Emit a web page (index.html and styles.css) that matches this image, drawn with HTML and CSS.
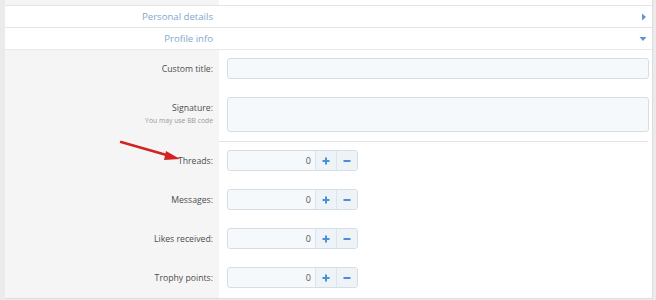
FILE: index.html
```html
<!DOCTYPE html>
<html lang="en">
<head>
    <meta charset="UTF-8">
    <title>Edit user</title>
    <link rel="stylesheet" href="styles.css">
</head>
<body>
    <div class="panel">
        <div class="row top-strip">
            <div class="label-cell"></div>
            <div class="field-cell"></div>
        </div>
        <div class="tab-header">
            <span class="tab-title">Personal details</span>
            <svg class="tab-icon" width="6" height="8" viewBox="0 0 6 8"><path d="M1 0.5 L5 4 L1 7.5 Z" fill="#5f95cf"/></svg>
        </div>
        <div class="tab-header">
            <span class="tab-title">Profile info</span>
            <svg class="tab-icon" width="8" height="6" viewBox="0 0 8 6"><path d="M0.5 1 L7.5 1 L4 5 Z" fill="#5f95cf"/></svg>
        </div>

        <div class="form-body">
            <div class="row first">
                <div class="label-cell"><span class="label">Custom title:</span></div>
                <div class="field-cell"><div class="text-input"></div></div>
            </div>
            <div class="row">
                <div class="label-cell">
                    <div class="label-group">
                        <span class="label">Signature:</span>
                        <span class="hint">You may use BB code</span>
                    </div>
                </div>
                <div class="field-cell"><div class="text-input area"></div></div>
            </div>
            <div class="row separated">
                <div class="label-cell"><span class="label">Threads:</span></div>
                <div class="field-cell">
                    <div class="number-input">
                        <span class="number-value">0</span>
                        <span class="spin-btn"><svg width="8" height="8" viewBox="0 0 8 8"><path d="M4 0.5 V7.5 M0.5 4 H7.5" stroke="#4b8fd6" stroke-width="2"/></svg></span>
                        <span class="spin-btn"><svg width="8" height="8" viewBox="0 0 8 8"><path d="M0.5 4 H7.5" stroke="#4b8fd6" stroke-width="2"/></svg></span>
                    </div>
                </div>
            </div>
            <div class="row">
                <div class="label-cell"><span class="label">Messages:</span></div>
                <div class="field-cell">
                    <div class="number-input">
                        <span class="number-value">0</span>
                        <span class="spin-btn"><svg width="8" height="8" viewBox="0 0 8 8"><path d="M4 0.5 V7.5 M0.5 4 H7.5" stroke="#4b8fd6" stroke-width="2"/></svg></span>
                        <span class="spin-btn"><svg width="8" height="8" viewBox="0 0 8 8"><path d="M0.5 4 H7.5" stroke="#4b8fd6" stroke-width="2"/></svg></span>
                    </div>
                </div>
            </div>
            <div class="row">
                <div class="label-cell"><span class="label">Likes received:</span></div>
                <div class="field-cell">
                    <div class="number-input">
                        <span class="number-value">0</span>
                        <span class="spin-btn"><svg width="8" height="8" viewBox="0 0 8 8"><path d="M4 0.5 V7.5 M0.5 4 H7.5" stroke="#4b8fd6" stroke-width="2"/></svg></span>
                        <span class="spin-btn"><svg width="8" height="8" viewBox="0 0 8 8"><path d="M0.5 4 H7.5" stroke="#4b8fd6" stroke-width="2"/></svg></span>
                    </div>
                </div>
            </div>
            <div class="row last">
                <div class="label-cell"><span class="label">Trophy points:</span></div>
                <div class="field-cell">
                    <div class="number-input">
                        <span class="number-value">0</span>
                        <span class="spin-btn"><svg width="8" height="8" viewBox="0 0 8 8"><path d="M4 0.5 V7.5 M0.5 4 H7.5" stroke="#4b8fd6" stroke-width="2"/></svg></span>
                        <span class="spin-btn"><svg width="8" height="8" viewBox="0 0 8 8"><path d="M0.5 4 H7.5" stroke="#4b8fd6" stroke-width="2"/></svg></span>
                    </div>
                </div>
            </div>

            <svg class="pointer-arrow" width="70" height="30" viewBox="0 0 70 30">
                <path d="M3 4 L52 18" stroke="#d32222" stroke-width="2.4" stroke-linecap="round"/>
                <path d="M62 21 L48 13 L46 22 Z" fill="#d32222"/>
            </svg>
        </div>
    </div>
</body>
</html>
```

FILE: styles.css
```css
body {
    margin: 0;
    background: #ebebeb;
    font-family: 'Open Sans', 'Noto Sans', sans-serif;
    color: #4a4a4a;
    height: 300px;
    overflow: hidden;
}
.panel {
    margin: 0 3px 0 5px;
    background: #fff;
    border-right: 1px solid #dcdcdc;
}
.row {
    display: flex;
}
.label-cell {
    width: 214px;
    flex-shrink: 0;
    background: #f5f5f5;
    display: flex;
    align-items: center;
    justify-content: flex-end;
    padding-right: 6px;
    box-sizing: border-box;
}
.field-cell {
    flex: 1;
    padding: 9px 3px 9px 8px;
}
.top-strip {
    height: 5px;
}
.top-strip .field-cell {
    padding: 0;
}
.tab-header {
    height: 21px;
    border-top: 1px solid #e4e4e4;
    display: flex;
    align-items: center;
    position: relative;
}
.tab-header:last-of-type {
    border-bottom: 1px solid #e4e4e4;
}
.tab-title {
    width: 214px;
    padding-right: 6px;
    box-sizing: border-box;
    text-align: right;
    font-size: 9.6px;
    color: #7fa8d0;
}
.tab-icon {
    margin-left: auto;
    margin-right: 5px;
}
.form-body {
    position: relative;
    border-top: 1px solid #e9e9e9;
    border-bottom: 1px solid #dedede;
}
.row.first .field-cell {
    padding-top: 8px;
}
.row.separated .field-cell {
    border-top: 1px solid #e4e4e4;
    margin-right: 4px;
    padding-top: 8px;
    padding-right: 0;
}
.row.last .field-cell {
    padding-bottom: 10px;
}
.label {
    font-size: 8.7px;
    color: #4d4d4d;
}
.label-group {
    display: flex;
    flex-direction: column;
    align-items: flex-end;
    margin-top: -3px;
}
.hint {
    font-size: 6.8px;
    color: #9a9a9a;
    margin-top: 2px;
}
.text-input {
    height: 19px;
    background: #f5f9fc;
    border: 1px solid #d5dee5;
    border-radius: 3px;
}
.text-input.area {
    height: 33px;
}
.number-input {
    width: 129px;
    height: 19px;
    display: flex;
    background: #f5f9fc;
    border: 1px solid #d5dee5;
    border-radius: 3px;
}
.number-value {
    flex: 1;
    text-align: right;
    padding-right: 4px;
    font-size: 9px;
    line-height: 19px;
    color: #555;
}
.spin-btn {
    width: 20px;
    display: flex;
    align-items: center;
    justify-content: center;
    border-left: 1px solid #dde5ec;
    background: #eef3f8;
}
.spin-btn:last-child {
    border-radius: 0 3px 3px 0;
}
.pointer-arrow {
    position: absolute;
    left: 113px;
    top: 88px;
}
```
